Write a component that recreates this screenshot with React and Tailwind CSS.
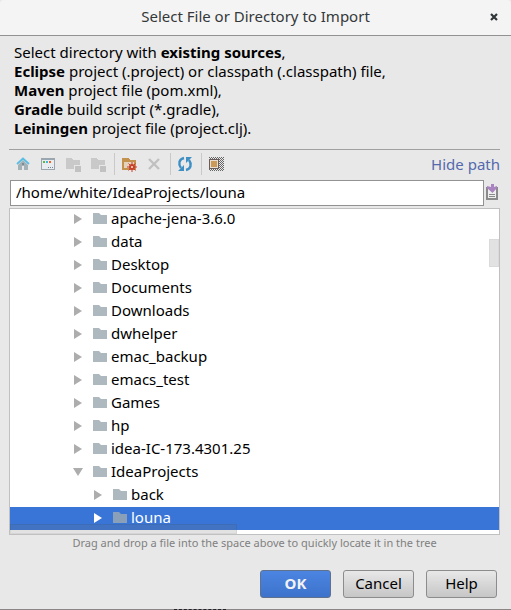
import React from "react";

const folders = [
  "apache-jena-3.6.0", "data", "Desktop", "Documents", "Downloads", "dwhelper",
  "emac_backup", "emacs_test", "Games", "hp", "idea-IC-173.4301.25",
];

const rows = [
  ...folders.map((name) => ({ name })),
  { name: "IdeaProjects", open: true },
  { name: "back", child: true },
  { name: "louna", child: true, selected: true },
];

function Icon({ children }) {
  return (
    <svg width="16" height="16" viewBox="0 0 16 16" shapeRendering="crispEdges" aria-hidden="true">
      {children}
    </svg>
  );
}

function HomeIcon() {
  return (
    <Icon>
      <path d="M8 4 3 9v5h4v-4h2v4h4V9z" fill="#a4b1b7" shapeRendering="auto" />
      <path d="M7 7h2v2H7z" fill="#7d8b92" />
      <path d="M2 8 8 2.500 14 8" fill="none" stroke="#59bde4" strokeWidth="1.800" shapeRendering="auto" />
    </Icon>
  );
}

function ProjectIcon() {
  return (
    <Icon>
      <path d="M1 2h14v12H1z" fill="#9aa7b0" />
      <path d="M2 4h12v9H2z" fill="#e9edef" />
      <path d="M3 5h2v2H3z" fill="#62b543" />
      <path d="M6 5h2v2H6z" fill="#40b6e0" />
      <path d="M9 5h2v2H9z" fill="#f26522" />
      <path d="M8 11h1v1H8zM10 11h1v1h-1zM12 11h1v1h-1z" fill="#77858d" />
    </Icon>
  );
}

function ModuleIcon() {
  return (
    <Icon>
      <path d="M1 2h5l2 2h7v5H9v4H1z" fill="#c9c9c9" />
      <path d="M10 10h6v6h-6z" fill="#c2c2c2" />
    </Icon>
  );
}

function NewFolderIcon() {
  return (
    <Icon>
      <path d="M1 2h6l2 2h6v10H1z" fill="#c4924f" />
      <path d="M3 6h10v6H3z" fill="#e3d3bc" />
      <path d="M11 6v10M6 11h10M7.500 7.500l7 7M14.500 7.500l-7 7" stroke="#c9402e" strokeWidth="1" shapeRendering="auto" />
      <circle cx="11" cy="11" r="3" fill="#c9402e" shapeRendering="auto" />
      <path d="M10 10h2v2h-2z" fill="#efc0a4" />
    </Icon>
  );
}

function DeleteIcon() {
  return (
    <Icon>
      <path d="m3 3 10 10M13 3 3 13" fill="none" stroke="#c0c0c0" strokeWidth="2.400" shapeRendering="auto" />
    </Icon>
  );
}

function RefreshIcon() {
  return (
    <Icon>
      <g fill="none" stroke="#3e8fc4" strokeWidth="2.400" shapeRendering="auto">
        <path d="M7 2C2 3 1 8 4 12" />
        <path d="M9 14c5-1 6-6 3-10" />
      </g>
      <path d="M7 9v6H1zM9 7V1h6z" fill="#3e8fc4" shapeRendering="auto" />
    </Icon>
  );
}

function HiddenIcon() {
  return (
    <Icon>
      <defs>
        <pattern id="checks" width="2" height="2" patternUnits="userSpaceOnUse">
          <path d="M0 0h1v1H0zM1 1h1v1H1z" fill="#666" />
        </pattern>
      </defs>
      <path d="M1 1h15v14H1z" fill="url(#checks)" />
      <path d="M1 3h10v10H1z" fill="#6a5c5c" />
      <path d="M2 4h8v8H2z" fill="#e8ddd0" />
      <path d="M3 5h6v6H3z" fill="#cb9a58" />
    </Icon>
  );
}

function HistoryIcon() {
  return (
    <Icon>
      <path d="M2 3h12v13H2z" fill="#8a8a8a" />
      <path d="M4 3h8v11H4z" fill="#efefef" />
      <path d="M5 10h6v1H5zM5 12h6v1H5z" fill="#8a8a8a" />
      <path d="M7 0h3v3l3-1v2L8.500 9 3 4V2l4 1z" fill="#aa84c1" shapeRendering="auto" />
    </Icon>
  );
}

function FolderIcon({ selected }) {
  return (
    <svg width="14" height="11" viewBox="0 0 14 11" aria-hidden="true">
      <path d="M0 0h6l2 2h6v9H0z" fill={selected ? "#8a9fb8" : "#adb8bf"} />
    </svg>
  );
}

function Tool({ label, children, disabled }) {
  return (
    <button type="button" aria-label={label} disabled={disabled} className="flex h-6 w-[25px] items-center justify-center">
      {children}
    </button>
  );
}

function Separator() {
  return <div className="mr-px ml-1 h-[22px] w-px bg-[#c9c9c9]" />;
}

function TreeRow({ name, open, child, selected }) {
  return (
    <li
      role="treeitem"
      aria-selected={!!selected}
      aria-expanded={!!open}
      className={`flex h-[23px] items-center pb-0.5 ${child ? "pl-[83px]" : "pl-[63px]"} ${selected ? "bg-[#3875d7] text-white" : "text-black"}`}
    >
      <svg width="10" height="10" viewBox="0 0 10 10" className="mr-[10px]" aria-hidden="true">
        <path d={open ? "M0 1h10L5 9z" : "M1 0v10l8-5z"} fill={selected ? "#fff" : "#adadad"} />
      </svg>
      <FolderIcon selected={selected} />
      <span className="ml-1">{name}</span>
    </li>
  );
}

function DialogButton({ children, primary }) {
  return (
    <button
      type="button"
      className={`h-7 w-[71px] rounded-[3px] border bg-linear-to-b pb-0.5 ${
        primary
          ? "border-[#5f718c] from-[#4b85e2] to-[#3d73cb] font-bold text-[#f2f2f2]"
          : "border-[#8c8c8c] from-[#e8e8e8] to-[#c6c6c6] text-black"
      }`}
    >
      {children}
    </button>
  );
}

export default function App() {
  return (
    <div className="min-h-screen bg-[#e8e8e8] font-['Noto_Sans',sans-serif] text-[15px] leading-[19px] text-black">
      <main className="flex min-h-screen flex-col">
        <header className="grid h-9 grid-cols-[34px_1fr_34px] items-center rounded-t border-b border-[#929292] bg-[#f4f4f4] pb-0.5">
          <h1 className="col-start-2 text-center text-[#34383a]">Select File or Directory to Import</h1>
          <button type="button" aria-label="Close" className="flex h-8 items-center justify-center">
            <svg width="8" height="8" viewBox="0 0 8 8" aria-hidden="true">
              <path d="m1 1 6 6M7 1 1 7" stroke="#303538" strokeWidth="2.200" />
            </svg>
          </button>
        </header>

        <p className="px-[14px] pt-[7px] pb-[11px]">
          Select directory with <b>existing sources</b>,<br />
          <b>Eclipse</b> project (.project) or classpath (.classpath) file,<br />
          <b>Maven</b> project file (pom.xml),<br />
          <b>Gradle</b> build script (*.gradle),<br />
          <b>Leiningen</b> project file (project.clj).
        </p>

        <div className="mr-[11px] ml-[9px] flex flex-col">
          <div className="flex h-[31px] items-center border-t border-[#a0a0a0] pb-0.5 pl-px">
            <Tool label="Home"><HomeIcon /></Tool>
            <Tool label="Project directory"><ProjectIcon /></Tool>
            <Tool label="Module directory" disabled><ModuleIcon /></Tool>
            <Tool label="Module content root" disabled><ModuleIcon /></Tool>
            <Separator />
            <Tool label="New folder"><NewFolderIcon /></Tool>
            <Tool label="Delete" disabled><DeleteIcon /></Tool>
            <Separator />
            <Tool label="Refresh"><RefreshIcon /></Tool>
            <Separator />
            <Tool label="Show hidden files"><HiddenIcon /></Tool>
            <a href="#path" className="ml-auto text-[#5569ae]">Hide path</a>
          </div>

          <div className="flex items-center">
            <input
              id="path"
              aria-label="Path"
              defaultValue="/home/white/IdeaProjects/louna"
              className="ml-px h-[26px] min-w-0 flex-1 border border-[#929292] bg-white px-[5px] pb-0.5"
            />
            <button type="button" aria-label="Recent paths" className="flex w-4 items-center justify-center pb-0.5">
              <HistoryIcon />
            </button>
          </div>

          <div className="relative mt-0.5 overflow-hidden border border-[#c0c0c0] bg-white pb-1">
            <ul role="tree" className="-mt-px">
              {rows.map((row) => <TreeRow key={row.name} {...row} />)}
            </ul>
            <div className="absolute top-[30px] right-0 h-7 w-[10px] border border-[#dadada] bg-[#e2e2e2]" />
            <div className="absolute bottom-0 left-0 h-[10px] w-[227px] border border-black/5 bg-[#6e6e6e]/20" />
          </div>

          <p className="text-center text-[11px] leading-[16px] text-[#808080]">
            Drag and drop a file into the space above to quickly locate it in the tree
          </p>
        </div>

        <footer className="mt-auto flex justify-end gap-3 pr-[14px] pb-[11px]">
          <DialogButton primary>OK</DialogButton>
          <DialogButton>Cancel</DialogButton>
          <DialogButton>Help</DialogButton>
        </footer>
        <div className="h-px bg-[#8b8588] pl-[174px]">
          <div className="w-[52px] border-t border-dashed border-[#252226]" />
        </div>
      </main>
    </div>
  );
}
